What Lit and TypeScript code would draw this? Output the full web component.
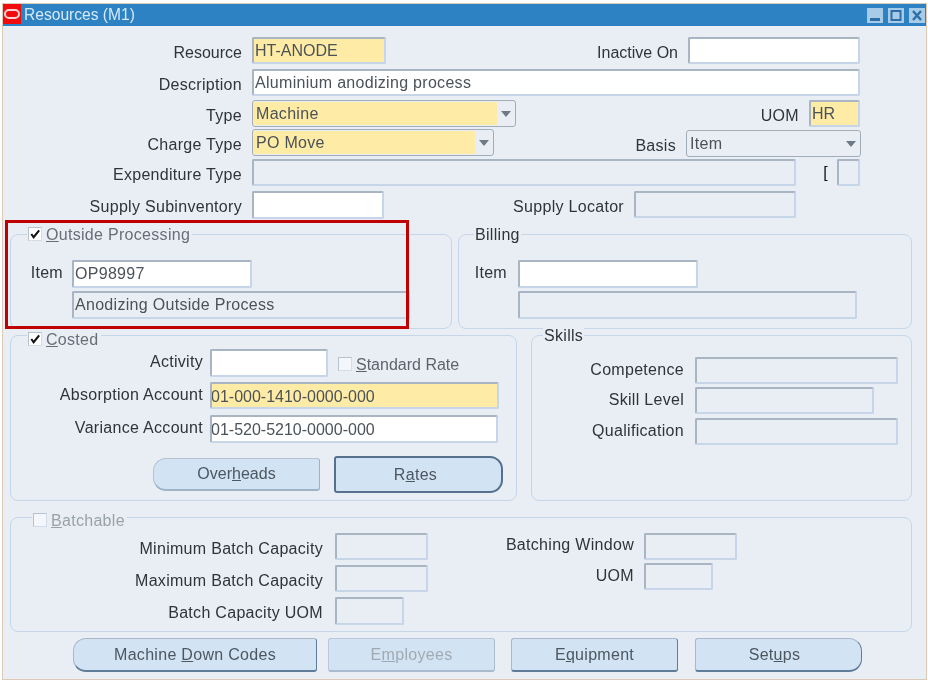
import { LitElement, html, css } from 'lit';
import { customElement } from 'lit/decorators.js';

const check = html`<svg class="tick" viewBox="0 0 13 13"><path d="M2.5 6.5 L5 10 L11 2.5" fill="none" stroke="#111" stroke-width="2.2"/></svg>`;

const arrow = html`<svg class="arrow" viewBox="0 0 10 6"><path d="M0 0 H10 L5 6 Z" fill="#6f7a85"/></svg>`;

@customElement('app-root')
export class AppRoot extends LitElement {
  static styles = css`
    :host {
      display: block;
      position: relative;
      width: 928px;
      height: 681px;
      background: #fff;
      font-family: "Liberation Sans", Arial, sans-serif;
      font-size: 16px;
      letter-spacing: 0.3px;
      color: #2f343a;
      overflow: hidden;
    }
    * { box-sizing: border-box; }
    .win {
      width: 925px;
      height: 677px;
      margin: 3px 0 0 2px;
      border: 1px solid #dcc9b6;
      background: #e9eef5;
      filter: blur(0.45px);
    }
    .title {
      height: 22px;
      background: #2c82c3;
      display: flex;
      align-items: center;
      color: #d9e9f6;
      font-size: 15.6px;
      letter-spacing: 0;
      white-space: nowrap;
    }
    .logo {
      width: 18px;
      height: 20px;
      margin-right: 3px;
      align-self: flex-start;
      background: #f00c0c;
      display: flex;
      align-items: center;
      justify-content: center;
    }
    .logo i {
      width: 16px;
      height: 10px;
      border: 2.5px solid #fbd5d5;
      border-radius: 5px;
    }
    .tbtns {
      margin-left: auto;
      display: flex;
      gap: 5px;
      padding-right: 1px;
    }
    .tbtns svg { width: 16px; height: 15px; display: block; }

    .top {
      padding: 11px 66px 0 0;
      display: grid;
      grid-template-rows: 32px 31px 29px 30px 32px 28px;
    }
    .row { display: flex; align-items: flex-start; white-space: nowrap; }
    .lab { text-align: right; line-height: 27px; flex: none; }
    .tight { letter-spacing: 0; }
    .up { padding-bottom: 2px; line-height: 25px; }
    .up2 { padding-bottom: 2px; line-height: 23px; }
    .mid { padding-top: 2px; }
    .main { width: 239px; margin-right: 10px; }
    .right { margin-left: auto; display: flex; align-items: flex-start; }
    .right .lab { margin-right: 10px; }
    .loc { margin-right: 64px; }
    .bracket { margin: 0 9px 0 auto; line-height: 27px; color: #111; }
    .nudge { margin-top: 1px; margin-right: -1px; }

    .fld {
      height: 27px;
      flex: none;
      border: 2px solid;
      border-color: #a9b5c3 #c6d5e7 #c6d5e7 #a9b5c3;
      border-radius: 2px;
      padding-left: 1px;
      line-height: 24px;
      color: #4b5258;
      overflow: hidden;
      white-space: nowrap;
    }
    .tall { height: 28px; }
    .white { background: #fff; }
    .req { background: #feeba5; }
    .num { letter-spacing: 0; padding-left: 0; text-indent: -1px; line-height: 25px; }
    .select {
      display: flex;
      justify-content: space-between;
      padding: 0;
      border-color: #a2adba;
      border-width: 1px;
      border-radius: 3px;
      background: #e9eef5;
    }
    .select span { padding-left: 3px; }
    .arrow { width: 10px; height: 6px; margin: 10px 4px 0 0; flex: none; }
    .fill { flex: 1; background: #feeba5; margin: 1px 0; line-height: 23px; }
    .tail { width: 18px; display: flex; }
    .tail .arrow { margin: 10px 0 0 4px; }
    .rest { width: 100%; line-height: 25px; }

    .w23 { width: 23px; }
    .w51 { width: 51px; }
    .w69 { width: 69px; }
    .w93 { width: 93px; }
    .w118 { width: 118px; }
    .w132 { width: 132px; }
    .w134 { width: 134px; }
    .w162 { width: 162px; }
    .w172 { width: 172px; }
    .w175 { width: 175px; }
    .w179 { width: 179px; }
    .w180 { width: 180px; }
    .w203 { width: 203px; }
    .w242 { width: 242px; }
    .w264 { width: 264px; }
    .w288 { width: 288px; }
    .w289 { width: 289px; }
    .w338 { width: 338px; }
    .w339 { width: 339px; }
    .w544 { width: 544px; }
    .w608 { width: 608px; }

    .band { display: flex; padding-left: 7px; }
    .b1 { margin-top: 15px; gap: 6px; }
    .b2 { margin-top: 6px; gap: 14px; }
    .b3 { margin-top: 16px; }
    .grp {
      position: relative;
      border: 1px solid #c5d6e9;
      border-radius: 8px;
      flex: none;
    }
    .legend {
      position: absolute;
      display: flex;
      align-items: center;
      height: 16px;
      padding: 0 2px 0 1px;
      background: #e9eef5;
      white-space: nowrap;
      color: #666f78;
    }
    .legend.dark { color: #2f343a; padding: 0 1px; }
    .l-out { left: 16px; top: -8px; }
    .l-bill { left: 15px; top: -8px; }
    .l-cost { left: 16px; top: -4px; }
    .l-skill { left: 11px; top: -8px; }
    .l-batch { left: 21px; top: -5px; color: #98a1aa; }

    .box {
      width: 14px;
      height: 14px;
      flex: none;
      margin-right: 4px;
      margin-top: -3px;
      border: 1px solid;
      border-color: #b7c2ce #d3dde8 #d3dde8 #b7c2ce;
      background: #fff;
      display: block;
    }
    .box.off { background: #f3f6fa; }
    .tick { display: block; width: 12px; height: 12px; }

    .g-out { width: 442px; height: 95px; padding-top: 25px; }
    .g-bill { width: 454px; height: 95px; padding-top: 25px; }
    .g-cost { width: 507px; height: 166px; padding-top: 13px; }
    .g-skill { width: 381px; height: 166px; padding-top: 21px; }
    .g-batch { width: 902px; height: 115px; padding-top: 15px; display: flex; }

    .out-lab { width: 52px; margin-right: 9px; }
    .bill-lab { width: 48px; margin-right: 11px; }
    .cost-lab { width: 192px; margin-right: 7px; }
    .skill-lab { width: 152px; margin-right: 11px; }
    .gap3 { margin-top: 3px; }
    .gap4 { margin-top: 4px; }
    .gap5 { margin-top: 5px; }
    .gap6 { margin-top: 6px; }

    .std {
      display: flex;
      align-items: center;
      margin: 7px 0 0 10px;
      color: #5b646d;
      letter-spacing: 0;
    }

    .col-a { width: 417px; flex: none; }
    .col-b { flex: none; }
    .a-lab { width: 312px; margin-right: 12px; }
    .b-lab { width: 206px; margin-right: 10px; }

    .btn {
      height: 34px;
      flex: none;
      display: flex;
      align-items: center;
      justify-content: center;
      background: #d2e3f3;
      border: 1px solid;
      border-color: #a9b9c9 #5f7c98 #5f7c98 #a9b9c9;
      border-bottom-width: 2px;
      color: #4d5760;
      border-radius: 3px;
    }
    .lr { border-radius: 13px 3px 3px 13px; }
    .rr { border-radius: 3px 13px 13px 3px; }
    .off-btn { color: #a1aab3; border-color: #b9c8d8 #a9bccf #a9bccf #b9c8d8; }
    .actions { display: flex; align-items: center; margin-top: 13px; padding-left: 142px; gap: 14px; }
    .over { width: 167px; height: 33px; letter-spacing: 0; border-color: #b3c3d3 #9fb3c7 #9fb3c7 #b3c3d3; }
    .rates { width: 169px; height: 37px; padding-right: 6px; border: 2px solid #56718d; }
    .bottom { display: flex; gap: 11px; margin-top: 6px; padding-left: 70px; }
    .bottom .gap16 { margin-left: 5px; }
    .bottom .gap17 { margin-left: 6px; padding-right: 8px; }
    .w244 { width: 244px; }
    .w167 { width: 167px; }

    .redbox {
      position: absolute;
      left: 5px;
      top: 220px;
      width: 404px;
      height: 109px;
      border: 3px solid #c00000;
      pointer-events: none;
    }
  `;

  render() {
    return html`
      <div class="win">
        <div class="title">
          <div class="logo"><i></i></div>
          Resources (M1)
          <div class="tbtns">
            <svg viewBox="0 0 16 15"><rect width="16" height="15" fill="#a8cbe7"/><rect x="3" y="10" width="10" height="3" fill="#2c6fa8"/></svg>
            <svg viewBox="0 0 16 15"><rect width="16" height="15" fill="#a8cbe7"/><rect x="3.5" y="3" width="9" height="9" fill="none" stroke="#2c6fa8" stroke-width="2"/></svg>
            <svg viewBox="0 0 16 15"><rect width="16" height="15" fill="#a8cbe7"/><path d="M4 3 L12 12 M12 3 L4 12" stroke="#2c6fa8" stroke-width="2.4"/></svg>
          </div>
        </div>

        <div class="top">
          <div class="row">
            <div class="lab main tight mid">Resource</div>
            <div class="fld req w134 tight">HT-ANODE</div>
            <div class="right">
              <div class="lab tight mid">Inactive On</div>
              <div class="fld white w172"></div>
            </div>
          </div>
          <div class="row">
            <div class="lab main mid">Description</div>
            <div class="fld white w608">Aluminium anodizing process</div>
          </div>
          <div class="row">
            <div class="lab main mid">Type</div>
            <div class="fld select w264">
              <div class="fill"><span>Machine</span></div>
              <div class="tail">${arrow}</div>
            </div>
            <div class="right">
              <div class="lab mid">UOM</div>
              <div class="fld req w51 tight">HR</div>
            </div>
          </div>
          <div class="row">
            <div class="lab main mid">Charge Type</div>
            <div class="fld select w242">
              <div class="fill"><span>PO Move</span></div>
              <div class="tail">${arrow}</div>
            </div>
            <div class="right nudge">
              <div class="lab mid">Basis</div>
              <div class="fld select w175">
                <span class="rest">Item</span>
                ${arrow}
              </div>
            </div>
          </div>
          <div class="row">
            <div class="lab main mid">Expenditure Type</div>
            <div class="fld w544"></div>
            <div class="bracket">[</div>
            <div class="fld w23"></div>
          </div>
          <div class="row">
            <div class="lab main mid">Supply Subinventory</div>
            <div class="fld white tall w132"></div>
            <div class="right loc">
              <div class="lab mid">Supply Locator</div>
              <div class="fld w162"></div>
            </div>
          </div>
        </div>

        <div class="band b1">
          <div class="grp g-out">
            <div class="legend l-out"><span class="box">${check}</span><span><u>O</u>utside Processing</span></div>
            <div class="row">
              <div class="lab up out-lab">Item</div>
              <div class="fld white tall w180">OP98997</div>
            </div>
            <div class="row gap3">
              <div class="lab out-lab"></div>
              <div class="fld tall w338">Anodizing Outside Process</div>
            </div>
          </div>
          <div class="grp g-bill">
            <div class="legend dark l-bill">Billing</div>
            <div class="row">
              <div class="lab up bill-lab">Item</div>
              <div class="fld white tall w180"></div>
            </div>
            <div class="row gap3">
              <div class="lab bill-lab"></div>
              <div class="fld tall w339"></div>
            </div>
          </div>
        </div>

        <div class="band b2">
          <div class="grp g-cost">
            <div class="legend l-cost"><span class="box">${check}</span><span><u>C</u>osted</span></div>
            <div class="row">
              <div class="lab up cost-lab">Activity</div>
              <div class="fld white tall w118"></div>
              <div class="std"><span class="box off"></span><span><u>S</u>tandard Rate</span></div>
            </div>
            <div class="row gap5">
              <div class="lab up cost-lab">Absorption Account</div>
              <div class="fld req w289 num">01-000-1410-0000-000</div>
            </div>
            <div class="row gap6">
              <div class="lab up cost-lab">Variance Account</div>
              <div class="fld white tall w288 num">01-520-5210-0000-000</div>
            </div>
            <div class="actions">
              <div class="btn lr over"><span>Over<u>h</u>eads</span></div>
              <div class="btn rr rates"><span>R<u>a</u>tes</span></div>
            </div>
          </div>
          <div class="grp g-skill">
            <div class="legend dark l-skill">Skills</div>
            <div class="row">
              <div class="lab up skill-lab">Competence</div>
              <div class="fld w203"></div>
            </div>
            <div class="row gap3">
              <div class="lab up skill-lab">Skill Level</div>
              <div class="fld w179"></div>
            </div>
            <div class="row gap4">
              <div class="lab up skill-lab">Qualification</div>
              <div class="fld w203"></div>
            </div>
          </div>
        </div>

        <div class="band b3">
          <div class="grp g-batch">
            <div class="legend l-batch"><span class="box off"></span><span><u>B</u>atchable</span></div>
            <div class="col-a">
              <div class="row">
                <div class="lab mid a-lab">Minimum Batch Capacity</div>
                <div class="fld w93"></div>
              </div>
              <div class="row gap3">
                <div class="lab mid a-lab">Maximum Batch Capacity</div>
                <div class="fld w93"></div>
              </div>
              <div class="row gap3">
                <div class="lab mid a-lab">Batch Capacity UOM</div>
                <div class="fld tall w69"></div>
              </div>
            </div>
            <div class="col-b">
              <div class="row">
                <div class="lab up2 b-lab">Batching Window</div>
                <div class="fld w93"></div>
              </div>
              <div class="row gap3">
                <div class="lab up b-lab">UOM</div>
                <div class="fld w69"></div>
              </div>
            </div>
          </div>
        </div>

        <div class="bottom">
          <div class="btn lr w244"><span>Machine <u>D</u>own Codes</span></div>
          <div class="btn off-btn w167"><span>E<u>m</u>ployees</span></div>
          <div class="btn w167 gap16"><span>E<u>q</u>uipment</span></div>
          <div class="btn rr w167 gap17"><span>Set<u>u</u>ps</span></div>
        </div>
      </div>
      <div class="redbox"></div>
    `;
  }
}
